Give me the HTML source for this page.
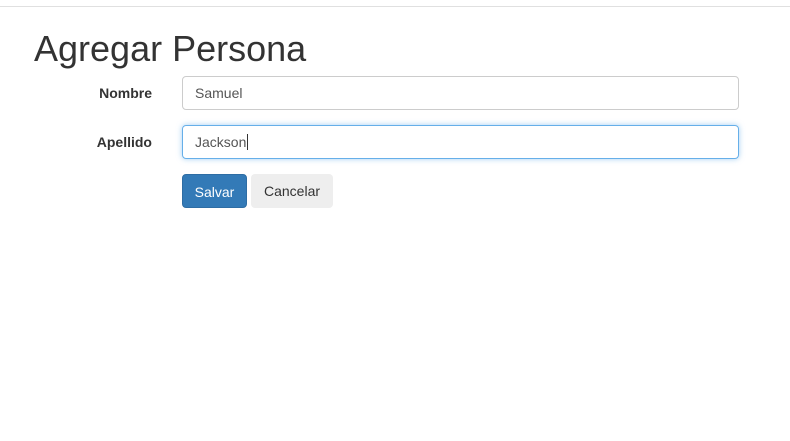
<!DOCTYPE html>
<html><head><style>
body{margin:0;background:#fff;font-family:"Liberation Sans",sans-serif;color:#333;width:790px;height:441px;overflow:hidden;position:relative}
.hr{position:absolute;left:0;right:0;top:6px;height:1px;background:#e0e0e0}
h1{position:absolute;left:34px;top:29px;margin:0;font-size:36px;font-weight:normal;line-height:40px}
.lbl{position:absolute;font-size:14px;font-weight:bold;right:638px;line-height:20px}
.inp{position:absolute;left:182px;height:32px;border:1px solid #ccc;border-radius:4px;font-size:14px;line-height:32px;box-sizing:content-box;padding-left:12px;width:543px;color:#555}
.focus{border-color:#66afe9;box-shadow:0 0 6px rgba(102,175,233,.6)}
.btn{position:absolute;top:174px;height:34px;border-radius:4px;font-size:14px;line-height:34px;text-align:center;box-sizing:border-box}
</style></head><body>
<div class="hr"></div>
<h1>Agregar Persona</h1>
<div class="lbl" style="top:83px">Nombre</div>
<div class="inp" style="top:76px">Samuel</div>
<div class="lbl" style="top:132px">Apellido</div>
<div class="inp focus" style="top:125px">Jackson<span style="border-left:1px solid #333;margin-left:1px"></span></div>
<div class="btn" style="left:182px;width:65px;background:#337ab7;border:1px solid #2e6da4;color:#fff">Salvar</div>
<div class="btn" style="left:251px;width:82px;background:#eee;color:#333">Cancelar</div>
</body></html>
